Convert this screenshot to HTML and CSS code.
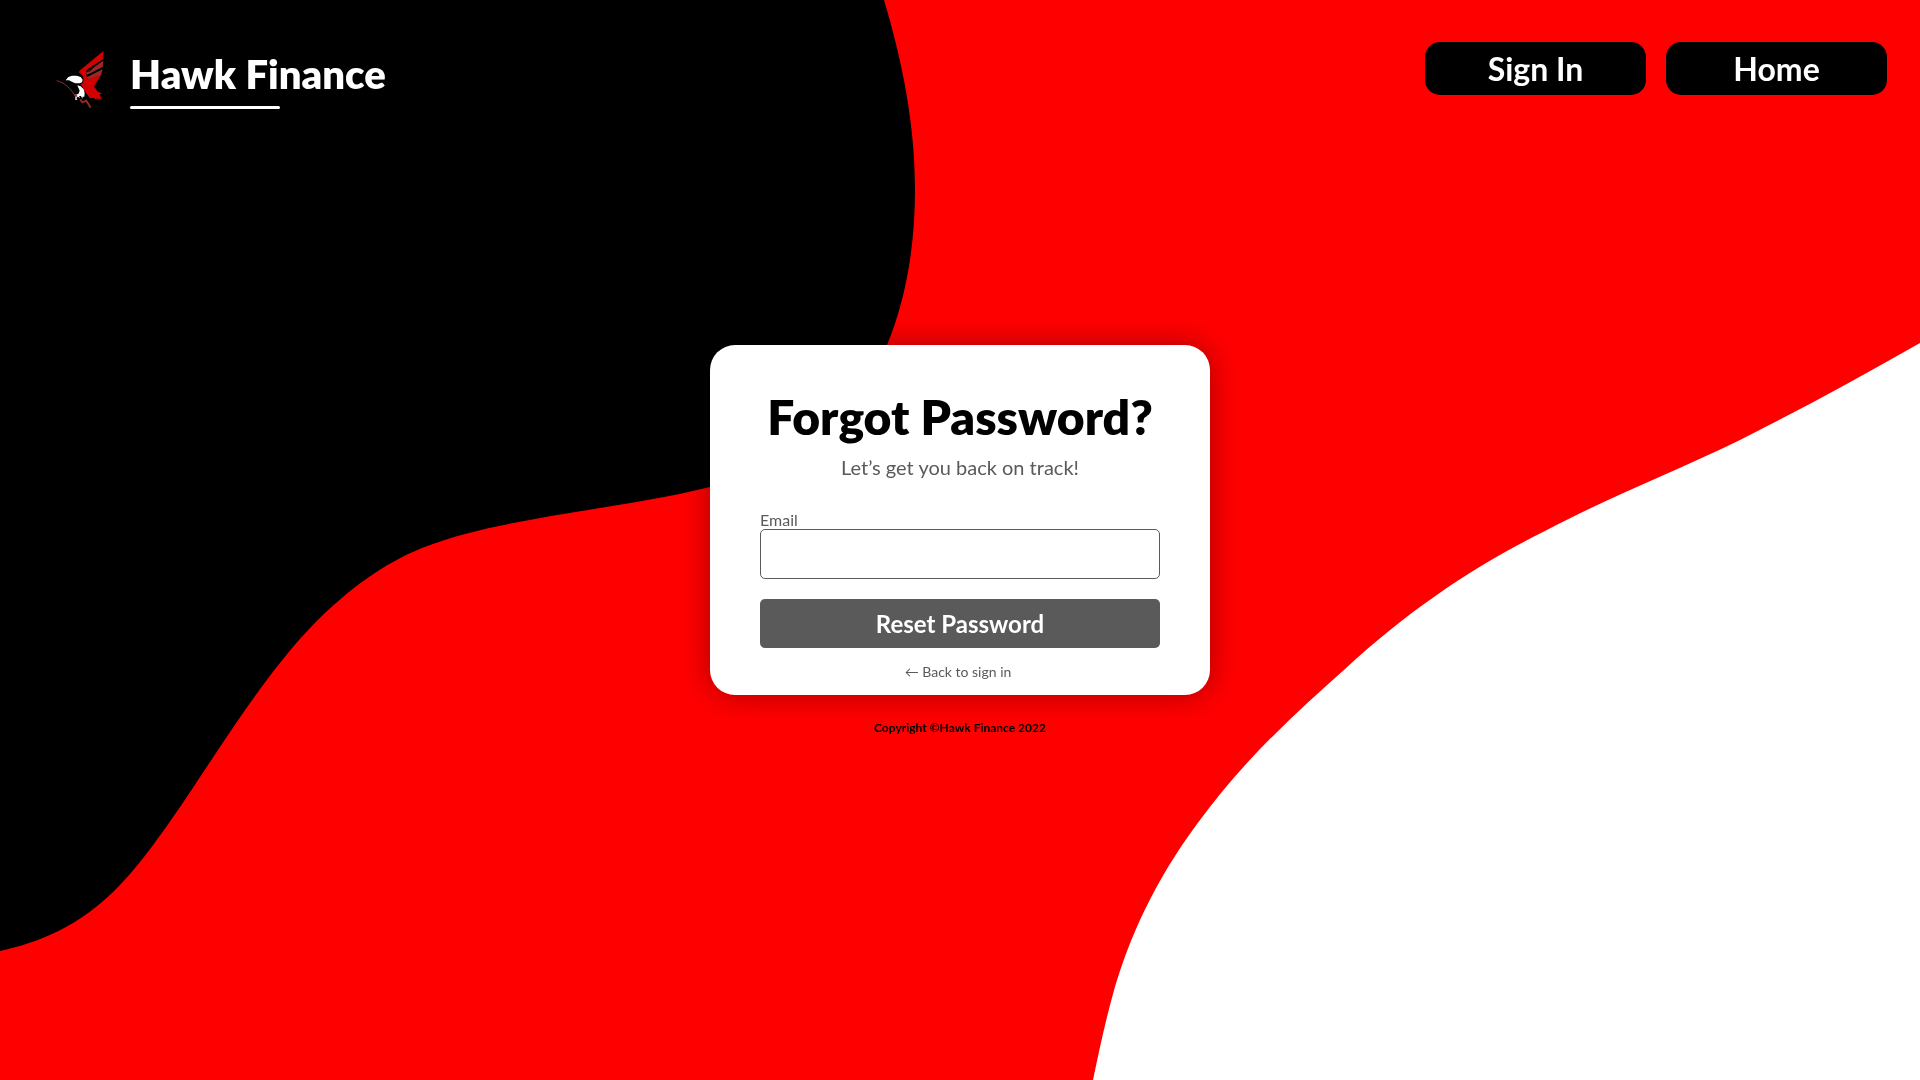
FILE: index.html
```
<!DOCTYPE html>
<html lang="en">
<head>
  <meta charset="utf-8">
  <meta name="viewport" content="width=device-width, initial-scale=1">
  <title>Hawk Finance - Forgot Password</title>
  <link rel="stylesheet" href="styles.css">
</head>
<body>
  <svg class="backdrop" viewBox="0 0 1920 1080" preserveAspectRatio="none" aria-hidden="true">
    <path fill="#000" d="M0 0V951C40 942 79 927 119 886C151 853 184 801 216 753C248 705 280 659 312 626C349 588 385 563 422 548C465 531 508 524 551 516C604 507 657 500 710 487C780 470 850 425 887 345C905 302 915 249 915 190C915 125 903 64 884 0Z"/>
    <path fill="#fff" d="M1920 343C1860 377 1800 410 1740 440C1674 472 1609 497 1543 532C1477 565 1411 608 1345 669C1296 713 1246 757 1197 824C1155 881 1129 937 1113 994C1105 1023 1099 1051 1093 1080H1920Z"/>
  </svg>

  <div class="page">
    <header class="top">
      <a class="brand" href="#">
        <svg class="brand-mark" viewBox="0 0 210 225" aria-hidden="true">
          <path fill="#d20000" d="M160 33L160 57L112 88L108 96L112 118L154 104L148 113L132 139L142 154L158 162L148 162L157 180L147 174L151 181L139 174L141 180L129 173L120 175L111 163L103 152L98 140L91 134L98 129L101 119L98 107L86 96L92 89Z"/>
          <path fill="#a02626" d="M160 62L158 81L112 104L108 98ZM158 88L153 105L115 118L110 112Z"/>
          <path fill="none" stroke="#000" stroke-width="3" d="M161 59L110 93M160 83L112 107M130 82L116 96"/>
          <path fill="#fff" d="M47 121L55 111L66 107L80 107L92 111L98 119L96 127L89 130L76 130L67 126L57 121ZM82 136L92 139L101 148L104 160L103 170L98 170L97 176L93 168L87 168L90 174L83 170L79 174L82 179L76 180L76 171L73 165L85 162L89 152Z"/>
          <path fill="none" stroke="#962828" stroke-width="3" d="M20 122C44 128 61 145 75 167"/>
          <path fill="none" stroke="#962828" stroke-width="6" d="M74 163L80 170M91 178L97 187L109 182L122 203"/>
        </svg>
        <span class="brand-name">Hawk Finance</span>
      </a>
      <nav class="nav">
        <button class="nav-button" type="button">Sign In</button>
        <button class="nav-button" type="button">Home</button>
      </nav>
    </header>

    <main class="content">
      <form class="card">
        <h1 class="title">Forgot Password?</h1>
        <p class="subtitle">Let’s get you back on track!</p>
        <label class="label" for="email">Email</label>
        <input class="input" id="email" type="email">
        <button class="submit" type="button">Reset Password</button>
        <a class="back" href="#">← Back to sign in</a>
      </form>
      <p class="copyright">Copyright ©Hawk Finance 2022</p>
    </main>
  </div>
</body>
</html>
```
FILE: styles.css
```
* {
  box-sizing: border-box;
}

body {
  margin: 0;
  background: #f00;
  color: #000;
  font-family: Lato, "Liberation Sans", sans-serif;
}

.backdrop {
  position: fixed;
  inset: 0;
  z-index: -1;
  width: 100%;
  height: 100%;
}

/* Header and content share one cell so the card centres on the whole window */
.page {
  display: grid;
  min-height: 100vh;
}

.top {
  grid-area: 1 / 1;
  align-self: start;
  display: flex;
  justify-content: space-between;
  align-items: flex-start;
  padding: 40px 33px 0 50px;
}

.brand {
  display: flex;
  gap: 10px;
  color: #fff;
  text-decoration: none;
}

.brand-mark {
  width: 70px;
  height: 75px;
}

.brand-name {
  padding-top: 10px;
  font-size: 40px;
  font-weight: 800;
  line-height: 48px;
}

.brand-name::after {
  content: "";
  display: block;
  width: 150px;
  height: 3px;
  margin-top: 8px;
  border-radius: 2px;
  background: #fff;
}

.nav {
  display: flex;
  gap: 20px;
  padding-top: 2px;
}

.nav-button {
  width: 221px;
  height: 53px;
  padding: 0;
  border: 0;
  border-radius: 15px;
  background: #000;
  color: #fff;
  font: 700 32px/40px Lato, "Liberation Sans", sans-serif;
}

.content {
  grid-area: 1 / 1;
  place-self: center;
  width: 500px;
  max-width: 100%;
}

.card {
  display: flex;
  flex-direction: column;
  padding: 43px 50px 15px;
  border-radius: 25px;
  background: #fff;
  box-shadow: 0 0 30px rgba(0, 0, 0, 0.35);
  color: #5a5a5a;
}

.title {
  margin: 0;
  color: #000;
  font-size: 48px;
  font-weight: 800;
  line-height: 58px;
  text-align: center;
}

.subtitle {
  margin: 9px 0 31px;
  font-size: 20px;
  line-height: 24px;
  text-align: center;
}

.label {
  font-size: 16px;
  line-height: 19px;
}

.input {
  height: 50px;
  padding: 0 12px;
  border: 1px solid #5a5a5a;
  border-radius: 5px;
  background: #fff;
  font: 16px/20px Lato, "Liberation Sans", sans-serif;
}

.submit {
  height: 49px;
  margin: 20px 0 15px;
  padding: 0;
  border: 0;
  border-radius: 5px;
  background: #5a5a5a;
  color: #fff;
  font: 700 24px/29px Lato, "Liberation Sans", sans-serif;
}

.back {
  align-self: center;
  padding-right: 4px;
  color: #5a5a5a;
  font-size: 14px;
  line-height: 17px;
  text-decoration: none;
}

.copyright {
  margin: 25px 0 0;
  font-size: 12px;
  font-weight: 700;
  line-height: 15px;
  text-align: center;
}
```
